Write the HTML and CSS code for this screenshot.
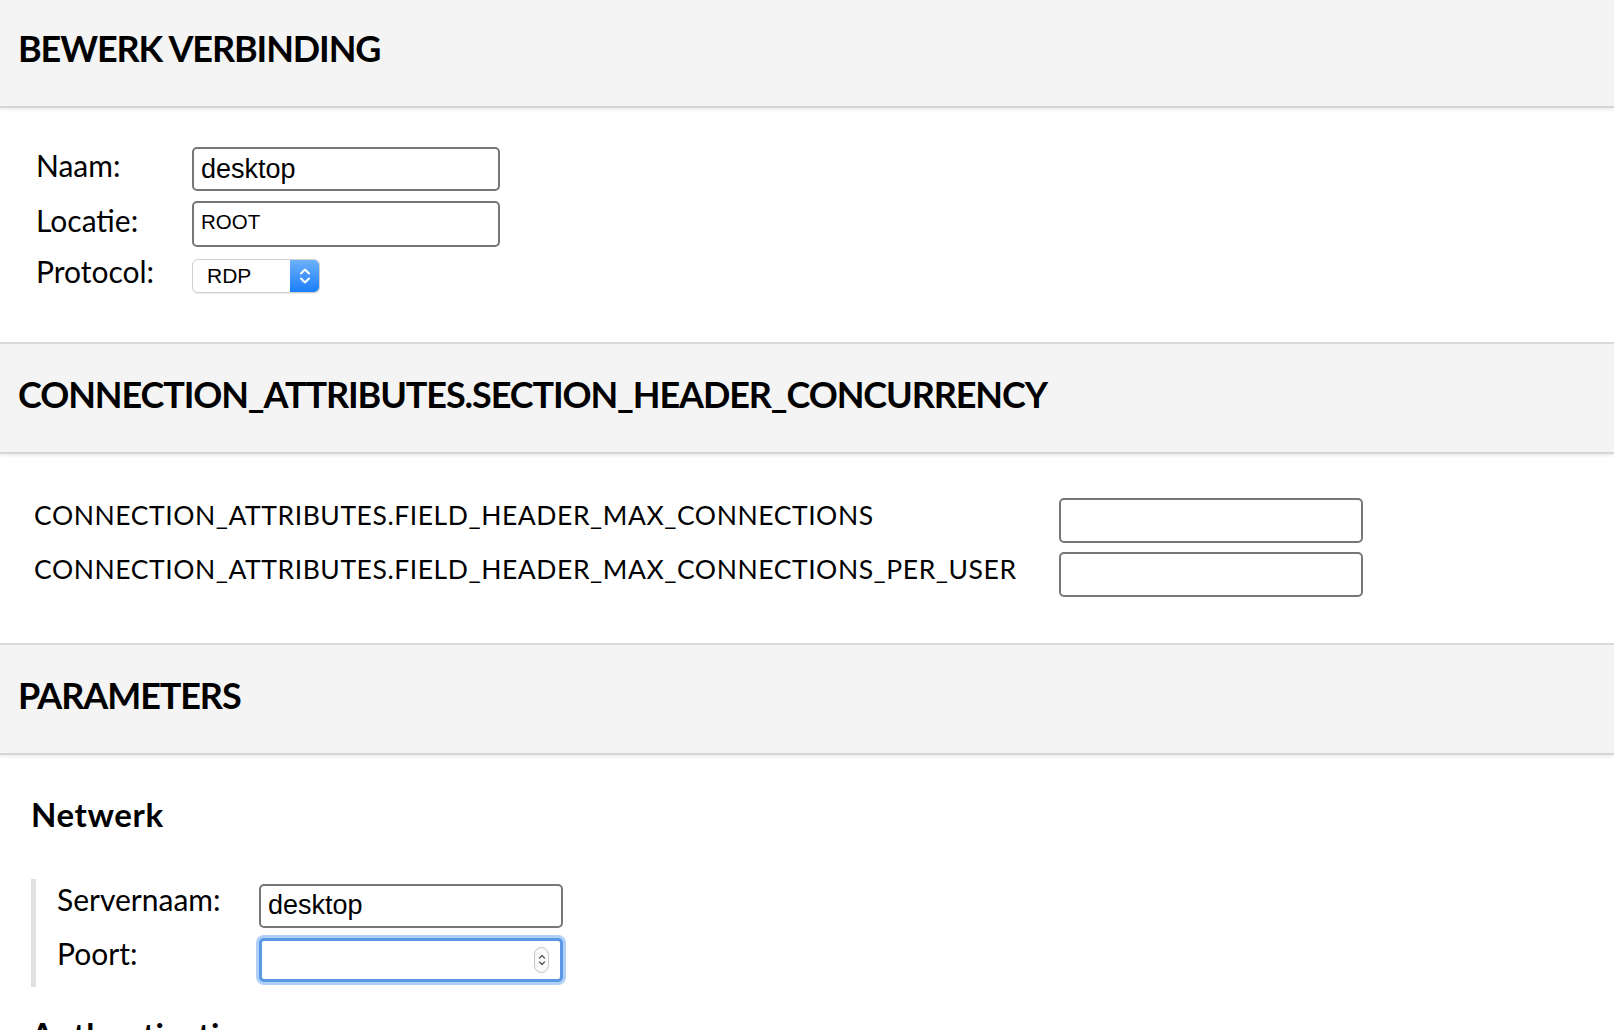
FILE: index.html
```html
<!DOCTYPE html>
<html lang="nl">
<head>
<meta charset="utf-8">
<title>Bewerk verbinding</title>
<link rel="stylesheet" href="styles.css">
</head>
<body>
<div class="page">
  <section class="section">
    <header class="sec-head sec-head-first"><h2>BEWERK VERBINDING</h2></header>
    <div class="sec-body body-props">
      <div class="grid grid-props">
        <label class="lbl">Naam:</label>
        <input class="txt txt-name" type="text" value="desktop">
        <label class="lbl">Locatie:</label>
        <input class="txt txt-loc" type="text" value="ROOT">
        <label class="lbl">Protocol:</label>
        <div class="select" role="listbox">
          <span class="select-val">RDP</span>
          <span class="select-btn">
            <svg width="14" height="22" viewBox="0 0 14 22"><path d="M3 8.5 L7 4.5 L11 8.5" fill="none" stroke="#fff" stroke-width="2" stroke-linecap="round" stroke-linejoin="round"/><path d="M3 13.5 L7 17.5 L11 13.5" fill="none" stroke="#fff" stroke-width="2" stroke-linecap="round" stroke-linejoin="round"/></svg>
          </span>
        </div>
      </div>
    </div>
  </section>

  <section class="section">
    <header class="sec-head"><h2>CONNECTION_ATTRIBUTES.SECTION_HEADER_CONCURRENCY</h2></header>
    <div class="sec-body body-conc">
      <div class="grid grid-conc">
        <label class="lbl lbl-small">CONNECTION_ATTRIBUTES.FIELD_HEADER_MAX_CONNECTIONS</label>
        <input class="txt txt-conc" type="text" value="">
        <label class="lbl lbl-small">CONNECTION_ATTRIBUTES.FIELD_HEADER_MAX_CONNECTIONS_PER_USER</label>
        <input class="txt txt-conc" type="text" value="">
      </div>
    </div>
  </section>

  <section class="section">
    <header class="sec-head"><h2>PARAMETERS</h2></header>
    <div class="sec-body body-params">
      <h3 class="group-title">Netwerk</h3>
      <div class="fieldset">
        <div class="grid grid-params">
          <label class="lbl lbl-param">Servernaam:</label>
          <input class="txt txt-name txt-param" type="text" value="desktop">
          <label class="lbl lbl-param">Poort:</label>
          <div class="num">
            <input class="num-input" type="text" value="">
            <span class="spin">
              <svg width="10" height="20" viewBox="0 0 10 20"><path d="M2.5 8 L5 5.5 L7.5 8" fill="none" stroke="#555" stroke-width="1.3" stroke-linecap="round" stroke-linejoin="round"/><path d="M2.5 12 L5 14.5 L7.5 12" fill="none" stroke="#555" stroke-width="1.3" stroke-linecap="round" stroke-linejoin="round"/></svg>
            </span>
          </div>
        </div>
      </div>
      <h3 class="group-title group-title-next">Authenticatie</h3>
    </div>
  </section>
</div>
</body>
</html>
```

FILE: styles.css
```css
html, body {
  margin: 0;
  padding: 0;
  background: #ffffff;
  overflow: hidden;
}

body {
  font-family: Lato, "Open Sans", sans-serif;
  color: #000;
}

.page {
  display: flex;
  flex-direction: column;
}

.sec-head {
  box-sizing: border-box;
  height: 112px;
  background: #f4f4f4;
  border-top: 2px solid #d9d9d9;
  border-bottom: 2px solid #d6d6d6;
  box-shadow: 0 2px 3px rgba(0, 0, 0, 0.07);
  padding: 29px 18px 0;
  position: relative;
  z-index: 1;
}

.sec-head-first {
  height: 108px;
  border-top: none;
  padding-top: 27px;
}

.sec-head h2 {
  margin: 0;
  font-size: 36px;
  line-height: 1.2;
  font-weight: 700;
  letter-spacing: -1.1px;
  white-space: nowrap;
}

.grid {
  display: grid;
  align-items: center;
}

.lbl {
  font-size: 30px;
  line-height: 1.2;
  white-space: nowrap;
  padding-bottom: 9px;
}

.lbl-small {
  font-size: 26.5px;
  letter-spacing: 0.56px;
  padding-bottom: 10px;
}

.lbl-param {
  padding-bottom: 13px;
}

.txt {
  box-sizing: border-box;
  margin: 0;
  border: 2px solid #777;
  border-radius: 5px;
  background: #fff;
  font-family: "Liberation Sans", Arial, sans-serif;
  color: #000;
  outline: none;
}

/* section 1 */
.body-props {
  padding: 39px 0 49px 36px;
}

.grid-props {
  grid-template-columns: 156px 308px;
  grid-template-rows: 44px 46px 36px;
  row-gap: 10px;
}

.txt-name {
  height: 44px;
  font-size: 27px;
  padding: 0 0 0 7px;
}

.txt-loc {
  height: 46px;
  font-size: 20.5px;
  padding: 0 0 4px 7px;
}

.select {
  box-sizing: border-box;
  width: 128px;
  height: 34px;
  align-self: end;
  display: flex;
  border: 1px solid #cfcfcf;
  border-radius: 6px;
  overflow: hidden;
  background: #fff;
  box-shadow: 0 1px 1px rgba(0, 0, 0, 0.08);
}

.select-val {
  flex: 1;
  font-family: "Liberation Sans", Arial, sans-serif;
  font-size: 21px;
  line-height: 32px;
  padding-left: 14px;
}

.select-btn {
  width: 29px;
  display: flex;
  align-items: center;
  justify-content: center;
  background: linear-gradient(#6cb1fb, #1b7efa);
}

/* section 2 */
.body-conc {
  padding: 44px 0 46px 34px;
}

.grid-conc {
  grid-template-columns: 1025px 304px;
  grid-template-rows: 45px 45px;
  row-gap: 9px;
}

.txt-conc {
  height: 45px;
}

/* section 3 */
.body-params {
  padding: 0 0 0 31px;
}

.group-title {
  margin: 40px 0 0;
  font-size: 33px;
  line-height: 1.2;
  font-weight: 700;
  letter-spacing: 0.6px;
}

.group-title-next {
  margin-top: 28px;
}

.fieldset {
  margin-top: 44px;
  border-left: 5px solid #e0e0e0;
  padding: 5px 0 5px 21px;
}

.grid-params {
  grid-template-columns: 202px 304px;
  grid-template-rows: 44px 44px;
  row-gap: 10px;
}

.txt-param {
  width: 304px;
}

.num {
  box-sizing: border-box;
  width: 304px;
  height: 44px;
  display: flex;
  align-items: center;
  border: 3px solid #5898e4;
  border-radius: 5px;
  box-shadow: 0 0 0 3px rgba(140, 186, 242, 0.7);
  background: #fff;
  padding-right: 11px;
}

.num-input {
  flex: 1;
  min-width: 0;
  border: none;
  outline: none;
  background: transparent;
  font-family: "Liberation Sans", Arial, sans-serif;
  font-size: 27px;
  height: 36px;
  padding: 0 6px;
}

.spin {
  box-sizing: border-box;
  width: 15px;
  height: 26px;
  border: 1px solid #c4c4c4;
  border-radius: 8px;
  display: flex;
  align-items: center;
  justify-content: center;
  background: #fafafa;
}
```
